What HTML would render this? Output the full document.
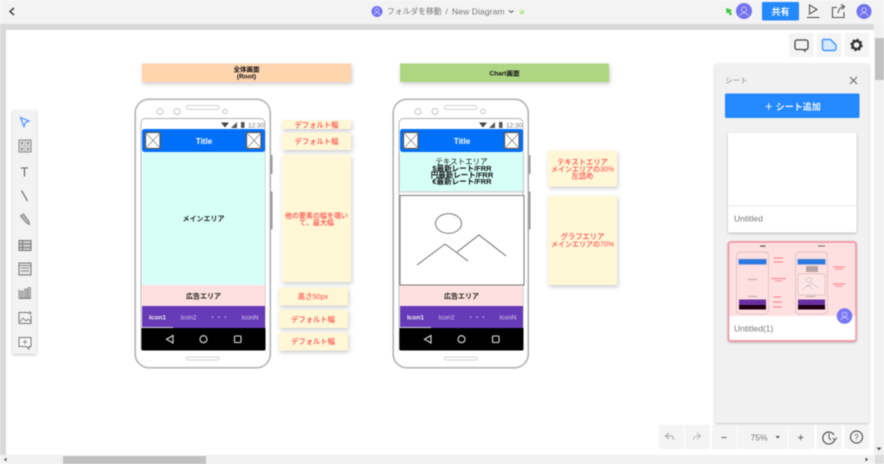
<!DOCTYPE html>
<html lang="ja"><head><meta charset="utf-8"><title>New Diagram</title>
<style>
html,body{margin:0;padding:0;width:884px;height:464px;overflow:hidden;background:#fff}
svg{display:block;filter:blur(.42px)}
text{font-family:"Liberation Sans","Noto Sans CJK JP",sans-serif}
.m{text-anchor:middle}
.b{font-weight:700}
.r{fill:#ff4a4a;font-size:7.3px;text-anchor:middle;font-weight:500}
.k{fill:#222;font-size:7px;text-anchor:middle;font-weight:700}
</style></head><body>
<svg width="884" height="464" viewBox="0 0 884 464" xmlns="http://www.w3.org/2000/svg">
<defs>
<filter id="s" x="-20%" y="-30%" width="140%" height="170%"><feDropShadow dx="1" dy="2" stdDeviation="2.2" flood-color="#000" flood-opacity=".2"/></filter>
<filter id="s2" x="-10%" y="-10%" width="120%" height="120%"><feDropShadow dx="0" dy="1" stdDeviation="1.2" flood-color="#000" flood-opacity=".25"/></filter>
<g id="phone">
<rect x="135" y="99" width="135.500" height="269" rx="14" fill="#fff" stroke="#8a8a8a" stroke-width=".8"/>
<rect x="136" y="100" width="133.500" height="267" rx="13" fill="none" stroke="#d4d4d4" stroke-width=".7"/>
<rect x="270.500" y="155" width="2" height="19" fill="#999"/>
<rect x="270.500" y="191.500" width="2" height="38" fill="#999"/>
<circle cx="160" cy="111.500" r="3" fill="#fff" stroke="#c4c4c4"/>
<circle cx="177" cy="111.500" r="3" fill="#fff" stroke="#c4c4c4"/>
<circle cx="225" cy="111.500" r="2.200" fill="#fff" stroke="#c4c4c4"/>
<rect x="186.500" y="105.500" width="32.500" height="4" rx="2" fill="#fff" stroke="#c4c4c4" stroke-width=".8"/>
<rect x="186.500" y="357" width="32.500" height="3" rx="1.500" fill="#fff" stroke="#c4c4c4" stroke-width=".8"/>
<path d="M141 350V123a4.500 4.500 0 0 1 4.500-4.500H260.500a4.500 4.500 0 0 1 4.500 4.500V350" fill="#fff" stroke="#999" stroke-width=".7"/>
<path d="M221 122.500h8l-4 5z" fill="#444"/><path d="M231 128l6-6v6z" fill="#555"/><rect x="241" y="122" width="3.500" height="6" rx=".5" fill="#555"/>
<rect x="142" y="129" width="123" height="23" rx="2.500" fill="#0070fb"/>
<rect x="145.500" y="132.500" width="14.500" height="16" fill="#fff" stroke="#555" stroke-width="1.200"/>
<path d="M146 133l14 15M160 133l-14 15" stroke="#888" stroke-width=".8"/>
<rect x="246.500" y="132.500" width="14.500" height="16" fill="#fff" stroke="#555" stroke-width="1.200"/>
<path d="M247 133l14 15M261 133l-14 15" stroke="#888" stroke-width=".8"/>
<rect x="142" y="285" width="123" height="21.500" fill="#ffe0e0"/>
<rect x="142" y="306" width="123" height="22" fill="#673ab7"/>
<rect x="142" y="327" width="31" height="1" fill="#d8cdf0"/>
<path d="M141.500 328H265.500V349a1.500 1.500 0 0 1-1.500 1.500H143a1.500 1.500 0 0 1-1.500-1.500z" fill="#000"/>
<path d="M173 335.500v7.500l-6.500-3.700z" fill="none" stroke="#ddd" stroke-width="1.100"/>
<circle cx="203.500" cy="339.200" r="3.500" fill="none" stroke="#ddd" stroke-width="1.100"/>
<rect x="234.500" y="336" width="6.500" height="6.500" rx="1" fill="none" stroke="#ddd" stroke-width="1.100"/>
</g>
</defs>

<!-- chrome -->
<rect width="884" height="464" fill="#d9d9d9"/>
<rect width="884" height="24" fill="#f3f3f3"/>
<rect x="6" y="30" width="868" height="425" fill="#fff"/>
<rect x="874" y="24" width="10" height="440" fill="#f1f1f1"/>
<rect x="875" y="38" width="9" height="42" fill="#c1c1c1"/>
<rect x="0" y="455" width="884" height="9" fill="#f1f1f1"/>
<rect x="63" y="456" width="143" height="8" fill="#c1c1c1"/>
<rect x="875" y="455" width="9" height="9" fill="#dcdcdc"/>
<path d="M4 459.500l2.500-2v4z" fill="#555"/><path d="M868 459.500l-2.500-2v4z" fill="#444"/><path d="M876.500 447.500h5l-2.500 3z" fill="#555"/>

<!-- top bar -->
<path d="M14 8l-4 3.500 4 3.500" fill="none" stroke="#444" stroke-width="1.500"/>
<circle cx="377" cy="11.500" r="5.500" fill="#7272ee"/><circle cx="377" cy="10" r="1.800" fill="none" stroke="#c9c9ff" stroke-width=".8"/><path d="M374 15c.5-3 5.500-3 6 0" fill="none" stroke="#c9c9ff" stroke-width=".8"/>
<text x="387" y="14" font-size="7.800" fill="#777">フォルダを移動</text>
<text x="445.500" y="14.500" font-size="8" fill="#777">/</text>
<text x="452" y="14.500" font-size="8.500" fill="#777" letter-spacing=".1">New Diagram</text>
<path d="M509 10.500l2.200 2 2.200-2" fill="none" stroke="#555" stroke-width="1"/>
<circle cx="522" cy="12" r="3" fill="#d4f2c4"/><path d="M520.500 12l1 1 2-2" fill="none" stroke="#7bc95a" stroke-width=".8"/>
<path d="M726 8l6 2-1.500 1.500 1.500 3-2 1-1.500-3-2 1z" fill="#3ec63e"/>
<circle cx="744" cy="11" r="8" fill="#7272ee"/><circle cx="744" cy="9.500" r="2.500" fill="none" stroke="#c4c4fa"/><path d="M740 16c.5-4 7.500-4 8 0" fill="none" stroke="#c4c4fa"/>
<rect x="762" y="2" width="37" height="18.500" rx="1.500" fill="#2488ff"/>
<text x="780.500" y="15" font-size="9" fill="#fff" class="m b">共有</text>
<path d="M809.500 5v9l7.500-4.500z" fill="none" stroke="#555" stroke-width="1.100"/><path d="M807 17.500h12.500" stroke="#555" stroke-width="1.100"/>
<path d="M837 7.500h-4.500v10h11.500v-5.500M838 13c.5-4 2.500-6 6-6.500M841 4.500l3.500 2-2.500 3" fill="none" stroke="#555" stroke-width="1.100"/>
<circle cx="864" cy="11.500" r="7.500" fill="#7272ee"/><circle cx="864" cy="10" r="2.300" fill="none" stroke="#c4c4fa"/><path d="M860 16c.5-4 7.500-4 8 0" fill="none" stroke="#c4c4fa"/>

<!-- header notes -->
<rect x="142" y="63.500" width="209" height="18.500" fill="#ffd5ae" filter="url(#s)"/>
<text x="246.500" y="71.500" font-size="6.500" fill="#111" class="m b">全体画面</text>
<text x="246.500" y="78.500" font-size="6.500" fill="#111" class="m b">(Root)</text>
<rect x="400" y="63.500" width="209" height="18.500" fill="#aed581" filter="url(#s)"/>
<text x="504.500" y="75.500" font-size="6.500" fill="#111" class="m b">Chart画面</text>

<!-- phone 1 -->
<use href="#phone"/>
<rect x="142" y="152" width="123" height="133" fill="#d5fff8"/>
<text x="248" y="127.500" font-size="6.500" fill="#777">12:30</text>
<text x="204" y="144" font-size="8" fill="#fff" class="m b">Title</text>
<text x="203.500" y="221" class="k">メインエリア</text>
<text x="203.500" y="298.500" class="k">広告エリア</text>
<text x="157.500" y="319.500" font-size="6.500" fill="#eee" class="m b">Icon1</text>
<text x="188.500" y="319.500" font-size="6.500" fill="#d8cdf0" class="m">Icon2</text>
<text x="219" y="319.500" font-size="6.500" fill="#d8cdf0" class="m">・・・</text>
<text x="250" y="319.500" font-size="6.500" fill="#d8cdf0" class="m">IconN</text>

<!-- phone 2 -->
<g transform="translate(258 0)"><use href="#phone"/></g>
<rect x="400" y="152" width="123" height="39" fill="#d5fff8" filter="url(#s2)"/>
<rect x="400" y="195.500" width="124" height="89.500" fill="#fff" stroke="#777" stroke-width="1"/>
<ellipse cx="448.500" cy="223.500" rx="13" ry="9.800" fill="none" stroke="#666" stroke-width=".9"/>
<path d="M417 265l28-21 23 17M457 252l22-17 27 21" fill="none" stroke="#666" stroke-width=".9"/>
<text x="506" y="127.500" font-size="6.500" fill="#777">12:30</text>
<text x="462" y="144" font-size="8" fill="#fff" class="m b">Title</text>
<text x="461.500" y="164" font-size="7.500" fill="#111" class="m">テキストエリア</text>
<text x="462" y="171" class="k" style="font-size:7.500px;fill:#111">$最新レート/FRR</text>
<text x="462" y="177.500" class="k" style="font-size:7.500px;fill:#111">円最新レート/FRR</text>
<text x="462" y="184" class="k" style="font-size:7.500px;fill:#111">€最新レート/FRR</text>
<text x="461.500" y="298.500" class="k">広告エリア</text>
<text x="415.500" y="319.500" font-size="6.500" fill="#eee" class="m b">Icon1</text>
<text x="446.500" y="319.500" font-size="6.500" fill="#d8cdf0" class="m">Icon2</text>
<text x="477" y="319.500" font-size="6.500" fill="#d8cdf0" class="m">・・・</text>
<text x="508" y="319.500" font-size="6.500" fill="#d8cdf0" class="m">IconN</text>

<!-- yellow notes -->
<g fill="#fff7d6" filter="url(#s)">
<rect x="282" y="120" width="69" height="9"/>
<rect x="282" y="133" width="69" height="17"/>
<rect x="282" y="155" width="69" height="127"/>
<rect x="279" y="287.500" width="69" height="18"/>
<rect x="279" y="310" width="69" height="18"/>
<rect x="279" y="332.500" width="69" height="18"/>
<rect x="548" y="150.500" width="69" height="36"/>
<rect x="548" y="196" width="69" height="89"/>
</g>
<text x="316.500" y="127.500" class="r">デフォルト幅</text>
<text x="316.500" y="144" class="r">デフォルト幅</text>
<text x="316.500" y="218" class="r" style="font-size:7px">他の要素の幅を覗い</text>
<text x="316.500" y="225" class="r" style="font-size:7px">て、最大幅</text>
<text x="313" y="299" class="r">高さ50px</text>
<text x="313" y="322" class="r">デフォルト幅</text>
<text x="313" y="344" class="r">デフォルト幅</text>
<text x="582.500" y="164.500" class="r">テキストエリア</text>
<text x="582.500" y="171.500" class="r" style="font-size:7px">メインエリアの30%</text>
<text x="582.500" y="178.500" class="r">左詰め</text>
<text x="582.500" y="239" class="r">グラフエリア</text>
<text x="582.500" y="246.500" class="r" style="font-size:7px">メインエリアの70%</text>

<!-- left toolbar -->
<rect x="12.500" y="110" width="24" height="244" rx="1.500" fill="#f3f3f3" filter="url(#s2)"/>
<path d="M20.500 117.500l8.500 3.500-3.500 1.500-1.500 4z" fill="none" stroke="#5a9cff" stroke-width="1.300"/>
<rect x="19" y="140" width="12" height="12" fill="#e4e4e4" stroke="#888"/>
<path d="M25 140v12M19 146h12" stroke="#999" stroke-width=".6"/><circle cx="22" cy="143" r="1" fill="none" stroke="#777" stroke-width=".7"/><circle cx="28" cy="143" r="1" fill="none" stroke="#777" stroke-width=".7"/><circle cx="22" cy="149" r="1" fill="none" stroke="#777" stroke-width=".7"/><circle cx="28" cy="149" r="1" fill="none" stroke="#777" stroke-width=".7"/>
<text x="24.500" y="176.500" font-size="13" fill="#666" class="m">T</text>
<path d="M21.500 190.500l6 10.500" stroke="#666" stroke-width="1.200"/>
<path d="M20.500 216l3-2 5.500 7.500.5 3-3-1.500z" fill="#bbb" stroke="#777" stroke-width=".9"/>
<rect x="19" y="240.500" width="12" height="10" fill="#ccc" stroke="#777"/><path d="M19 244h12M19 247.500h12M22.500 240.500v10" stroke="#666" stroke-width=".8"/>
<rect x="19" y="263" width="12" height="12" fill="#e4e4e4" stroke="#777"/><path d="M21 268h8M21 271h8M19 265.500h12" stroke="#777" stroke-width=".7"/>
<path d="M19 298.500v-9M19 298.500h12" stroke="#888"/><rect x="20.500" y="291" width="2.500" height="7" fill="#bbb" stroke="#777" stroke-width=".6"/><rect x="24.500" y="289" width="2.500" height="9" fill="#bbb" stroke="#777" stroke-width=".6"/><rect x="28" y="287.500" width="2.500" height="10.500" fill="#bbb" stroke="#777" stroke-width=".6"/>
<path d="M29 312.500h-10v11h12v-8" fill="none" stroke="#777"/><path d="M20 322l3-4 3 3 2-2 3 3" fill="none" stroke="#777" stroke-width=".8"/><path d="M30 311v4M28 313h4" stroke="#777" stroke-width=".8"/>
<path d="M19 337.500h12v9h-2v2.500l-2.500-2.500h-7.500z" fill="#fafafa" stroke="#777"/><path d="M25 339.500v5M22.500 342h5" stroke="#777" stroke-width=".8"/>

<!-- top right tools -->
<g fill="#f4f4f4"><rect x="789" y="33" width="24.500" height="24" rx="1.500"/><rect x="817" y="33" width="24.500" height="24" rx="1.500"/><rect x="844.500" y="33" width="24.500" height="24" rx="1.500"/></g>
<path d="M797 40h9a2 2 0 0 1 2 2v5.500a2 2 0 0 1-2 2h-1v1.500l-2-1.500h-6a2 2 0 0 1-2-2V42a2 2 0 0 1 2-2z" fill="none" stroke="#444" stroke-width="1.300"/>
<path d="M823.500 39.500h7l5.500 5.500v3.500a2 2 0 0 1-2 2h-9.500a2 2 0 0 1-2-2v-8.500z" fill="#d5e8ff" stroke="#3f96ff" stroke-width="1.400"/>
<circle cx="856.500" cy="45" r="4" fill="none" stroke="#333" stroke-width="2.400"/>
<circle cx="856.500" cy="45" r="5.500" fill="none" stroke="#333" stroke-width="1.400" stroke-dasharray="2.200 2.100"/>

<!-- right panel -->
<rect x="715" y="63.500" width="154" height="359.500" rx="1.500" fill="#f1f1f1" filter="url(#s2)"/>
<text x="725" y="83" font-size="7.500" fill="#888">シート</text>
<path d="M850 77l7 7M857 77l-7 7" stroke="#666" stroke-width="1.100"/>
<rect x="725" y="93.500" width="134.500" height="24.500" rx="1.500" fill="#2488ff"/>
<text x="792.500" y="110" font-size="9" fill="#f2f7ff" class="m b">＋ シート追加</text>
<rect x="728" y="133" width="128.500" height="99.500" rx="2" fill="#fff" filter="url(#s2)"/>
<rect x="728" y="205" width="128.500" height="1.500" fill="#f0f0f0"/>
<text x="734" y="221.500" font-size="8.500" fill="#777">Untitled</text>

<rect x="728.500" y="242" width="127.500" height="99" rx="2" fill="#ffe0e0" stroke="#f08c98" stroke-width="1.400" filter="url(#s2)"/>
<path d="M729.300 316H855.300V338.500a1.500 1.500 0 0 1-1.500 1.500H730.800a1.500 1.500 0 0 1-1.500-1.500z" fill="#fff"/>
<g>
<rect x="736.500" y="252" width="32" height="62" rx="3.500" fill="#ffe0e0" stroke="#e0c0c4" stroke-width=".9"/>
<rect x="738.500" y="259" width="28" height="5.500" fill="#2a76e0" stroke="#a9b8dc" stroke-width=".7"/>
<rect x="739" y="299.500" width="27" height="5.500" fill="#6a2fa0"/><rect x="739" y="305" width="27" height="4.500" fill="#200010"/>
<rect x="795.500" y="252" width="32" height="62" rx="3.500" fill="#ffe0e0" stroke="#e0c0c4" stroke-width=".9"/>
<rect x="797.500" y="259" width="28" height="5.500" fill="#2a76e0" stroke="#a9b8dc" stroke-width=".7"/>
<rect x="798" y="274" width="27" height="21" fill="#ffe6e6" stroke="#c8b4b4" stroke-width=".6"/>
<ellipse cx="809" cy="280" rx="3" ry="2.300" fill="none" stroke="#b0a0a0" stroke-width=".5"/>
<path d="M802 290l6-5 5 4M807 287l5-4 6 5" fill="none" stroke="#b0a0a0" stroke-width=".5"/>
<rect x="806" y="266" width="12" height="6" fill="#b8a4a4"/>
<rect x="798" y="299.500" width="27" height="5.500" fill="#6a2fa0"/><rect x="798" y="305" width="27" height="4.500" fill="#200010"/>
<g fill="#ff7a86">
<rect x="773.500" y="257.500" width="9.500" height="1"/><rect x="773.500" y="261.500" width="9.500" height="1"/>
<rect x="771" y="278" width="15" height="1"/><rect x="775" y="280.500" width="7" height=".8"/>
<rect x="774" y="296.500" width="7" height="1"/><rect x="773" y="301.500" width="9" height="1"/><rect x="773" y="306.500" width="9" height="1"/>
<rect x="833" y="266.500" width="12" height="1"/><rect x="835" y="268.800" width="8" height=".8"/>
<rect x="833" y="283.500" width="12" height="1"/><rect x="835" y="285.800" width="8" height=".8"/>
</g>
<rect x="760" y="245.500" width="5.500" height="1.200" fill="#555"/><rect x="818" y="245.500" width="7" height="1" fill="#666"/>
<rect x="748" y="279" width="9" height=".8" fill="#a89898"/><rect x="748" y="296" width="9" height=".8" fill="#a89898"/><rect x="806" y="296" width="9" height=".8" fill="#a89898"/>
</g>
<text x="734" y="331.500" font-size="8.500" fill="#777">Untitled(1)</text>
<circle cx="844.500" cy="316" r="7.800" fill="#7878f5"/><circle cx="844.500" cy="314.500" r="2.300" fill="none" stroke="#c9c9ff" stroke-width=".9"/><path d="M841 320c.5-3.500 6.500-3.500 7 0" fill="none" stroke="#c9c9ff" stroke-width=".9"/>

<!-- bottom tools -->
<g fill="#f4f4f4">
<rect x="659" y="425" width="25" height="24" rx="1"/><rect x="685" y="425" width="24.500" height="24" rx="1"/>
<rect x="712" y="425" width="25" height="24" rx="1"/><rect x="738" y="425" width="49.500" height="24"/><rect x="788.500" y="425" width="25.500" height="24" rx="1"/>
<rect x="817" y="425" width="24.500" height="24" rx="1"/><rect x="844.500" y="425" width="24.500" height="24" rx="1"/>
</g>
<path d="M669 433l-3.500 3 3.500 3M665.500 436h5c2 0 3 1.500 3 4" fill="none" stroke="#aaa" stroke-width="1.100"/>
<path d="M697 433l3.500 3-3.500 3M700.500 436h-3.500c-2 0-3.500 1.500-3.500 4" fill="none" stroke="#bbb" stroke-width="1.100"/>
<path d="M721.500 437.500h5" stroke="#777" stroke-width="1.200"/>
<text x="759" y="440.500" font-size="8.500" fill="#777" class="m">75%</text>
<path d="M775.500 436h4.500l-2.250 2.500z" fill="#555"/>
<path d="M798 437.500h5.500M800.700 434.700v5.500" stroke="#666" stroke-width="1"/>
<path d="M834.500 440a6 6 0 1 1-.5-5" fill="none" stroke="#555" stroke-width="1.200"/><path d="M829 433.500v4.500l2 2M833 438l2 2 2-2.500" fill="none" stroke="#555" stroke-width="1"/>
<circle cx="856.500" cy="437" r="6" fill="none" stroke="#555" stroke-width="1.200"/>
<text x="856.500" y="440" font-size="8" fill="#555" class="m">?</text>
</svg>
</body></html>
